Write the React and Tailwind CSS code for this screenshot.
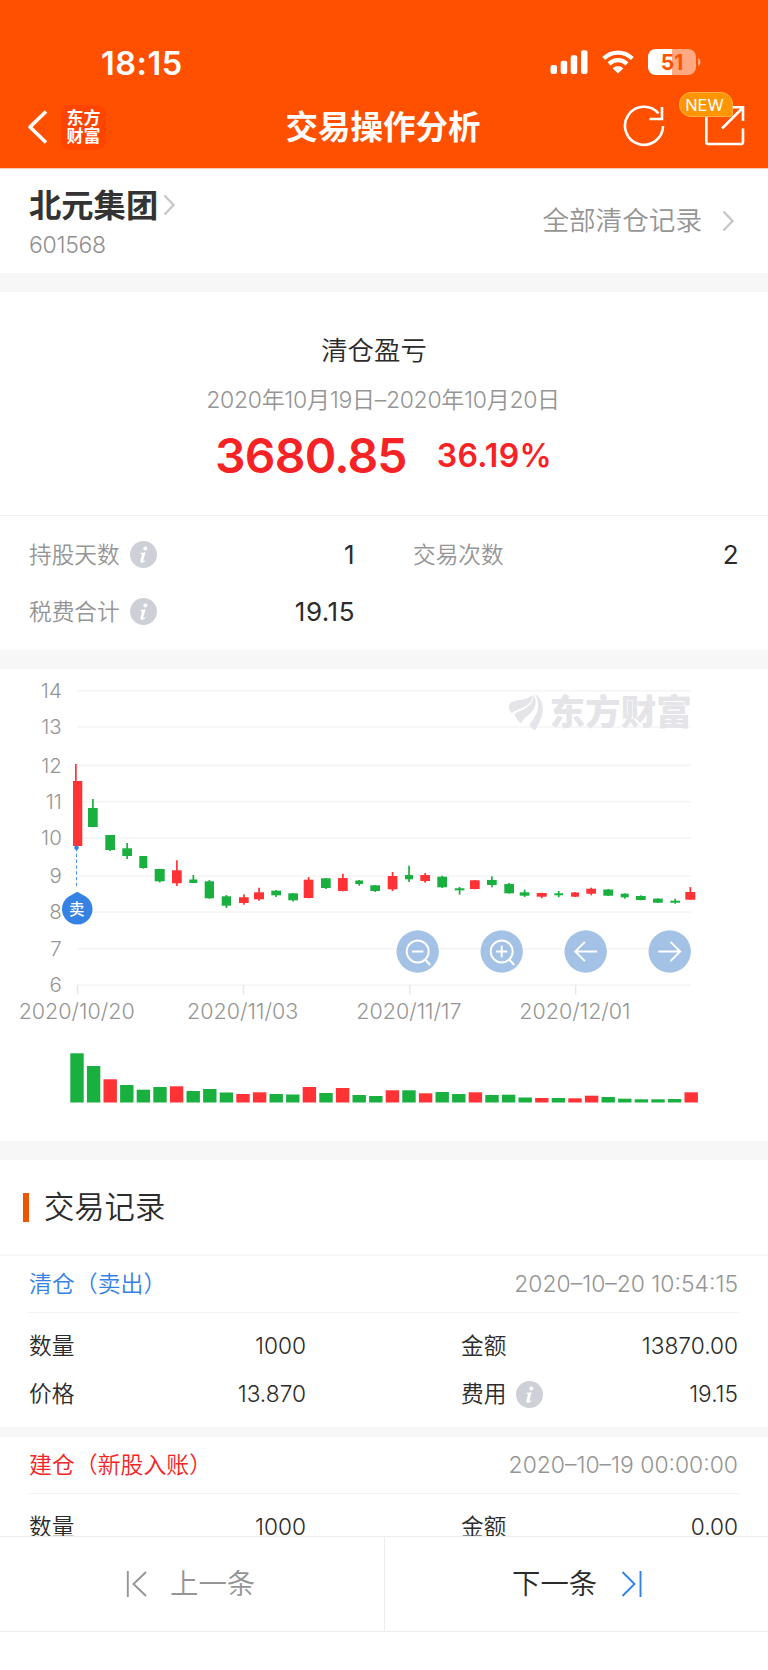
const RED = '#ff3336';
const GREEN = '#19b040';

// x, width, high, body top, body bottom, low, rising
const candles = [
    [73, 9.3, 764, 781, 846, 846, 1],
    [88, 9.7, 799, 808, 827, 827.3, 0],
    [105.3, 9.7, 835, 835, 850, 851, 0],
    [122.3, 9.7, 843, 848.3, 856, 859, 0],
    [139.3, 8, 856, 856, 868, 868.7, 0],
    [154.7, 10, 869, 869, 881.3, 882.5, 0],
    [172, 9.7, 860.3, 870.3, 883.3, 886, 1],
    [189.3, 8, 875, 879.5, 883, 883, 0],
    [204.7, 9.3, 880, 881.3, 898.3, 898.7, 0],
    [221.7, 9.3, 895, 896.3, 905.7, 908, 0],
    [239, 9.7, 894.3, 897.3, 903, 904.7, 1],
    [254, 10, 887.7, 892.3, 899.3, 900.7, 1],
    [271.3, 9.7, 890, 890.7, 895.3, 897, 0],
    [288.3, 9.7, 893, 893.3, 900.3, 901.5, 0],
    [303.7, 9.7, 877, 879.7, 898, 898.3, 1],
    [321, 9.7, 878, 878.3, 888, 889, 0],
    [338, 9.7, 873.7, 878, 891, 891.3, 1],
    [355.3, 7.7, 880, 880.5, 884, 885.7, 0],
    [370.3, 9.7, 885, 885.3, 891, 892, 0],
    [387.7, 9.7, 872, 876, 889.3, 891, 1],
    [405, 8, 865.7, 875, 879.3, 882, 0],
    [420.3, 9.7, 873, 875, 881, 882.7, 1],
    [437.3, 9.7, 875.7, 876.7, 887.3, 888, 0],
    [454.7, 9.7, 887, 888.3, 890.3, 894.7, 0],
    [470, 9.7, 880, 880.3, 889, 889.3, 1],
    [487, 9.7, 876.3, 880, 885, 887.3, 0],
    [504.3, 9.7, 883, 884, 893.3, 893.7, 0],
    [519.7, 9.7, 889.7, 892.3, 895.7, 897, 0],
    [536.7, 10, 892.7, 893, 896.7, 898.3, 1],
    [554.3, 8.7, 891, 893.3, 895.3, 897.3, 0],
    [571, 8, 892, 892.5, 896.7, 897, 1],
    [586.3, 9.7, 887.7, 888.7, 893.7, 895.3, 1],
    [603.3, 9.7, 889, 889.5, 895.7, 896, 0],
    [620.7, 8, 893.3, 893.7, 897.3, 898.7, 0],
    [636, 9.7, 895.3, 896, 900, 900.3, 0],
    [653, 9.7, 898.3, 898.6, 902.7, 903, 0],
    [670.3, 9.7, 898.7, 900.7, 902.7, 903.7, 0],
    [685.3, 10, 887, 892, 899.7, 900, 1],
];

// bar height, rising
const volumes = [
    [49.2, 0], [36.5, 0], [23.2, 1], [17.5, 0], [12.8, 0], [15.5, 0], [16.2, 1], [11.5, 0],
    [13.5, 0], [10, 0], [8.5, 1], [10.2, 1], [8.5, 0], [8, 0], [15.5, 1], [9.5, 0],
    [14.5, 1], [7.5, 0], [6.5, 0], [12.2, 1], [12.2, 0], [9.2, 1], [10.5, 0], [8.5, 0],
    [10.2, 1], [7.5, 0], [7.8, 0], [5, 0], [4.5, 1], [4.5, 0], [4.2, 1], [6.8, 1],
    [5.5, 0], [3.8, 0], [3.2, 0], [3.2, 0], [3.5, 0], [10.2, 1],
];

const levels = [
    [14, 690.7], [13, 727], [12, 765.3], [11, 801.7], [10, 838],
    [9, 876], [8, 912], [7, 948.7], [6, 985],
];

const ticks = [
    ['2020/10/20', 77.5], ['2020/11/03', 243.5], ['2020/11/17', 409.7], ['2020/12/01', 575.7],
];

function InfoIcon() {
    return (
        <svg width="27" height="27" viewBox="0 0 27 27" className="shrink-0">
            <circle cx="13.5" cy="13.5" r="13.5" fill="#cdd0d6" />
            <circle cx="15.3" cy="7.6" r="2" fill="#fff" />
            <path d="M10.6 12 L15.6 11.2 L13.3 19.6 Q13.3 20.6 16 19 Q14.6 22 11.8 22 Q10 22 10.4 19.6 L12.1 13.2 L10.4 12.9 Z" fill="#fff" />
        </svg>
    );
}

function Chevron({ className }) {
    return (
        <svg width="13" height="22" viewBox="0 0 13 22" fill="none" stroke="#c8c8c8" strokeWidth="2.4" className={className}>
            <path d="M1.5 1.5 L10.5 11 L1.5 20.5" />
        </svg>
    );
}

function StatusBar() {
    return (
        <div className="flex h-[84px] items-end justify-between pr-[67px] pl-[101px]">
            <span className="text-[32.5px] leading-[40px] font-semibold tracking-[0.5px]">18:15</span>
            <div className="mb-[9px] flex items-center">
                <svg width="38" height="26" viewBox="0 0 38 26" fill="#fff">
                    <rect x="0.5" y="16" width="6.5" height="9" rx="2" />
                    <rect x="10.7" y="11.7" width="6.5" height="13.3" rx="2" />
                    <rect x="20.7" y="6.3" width="6.5" height="18.7" rx="2" />
                    <rect x="31" y="1.3" width="6.5" height="23.7" rx="2" />
                </svg>
                <svg width="32" height="24" viewBox="0 0 32 24" fill="none" stroke="#fff" strokeWidth="4.3" className="ml-[14px]">
                    <path d="M1.7 8.5 Q8 2.6 16 2.6 Q24 2.6 30.3 8.5" />
                    <path d="M7 13.9 Q11 10.2 16 10.2 Q21 10.2 25 13.9" />
                    <path d="M16 23.5 L10.6 18.3 Q16 13.7 21.4 18.3 Z" fill="#fff" stroke="none" />
                </svg>
                <svg width="53" height="26" viewBox="0 0 53 26" className="ml-[14px]">
                    <rect width="48" height="26" rx="8" fill="#ffa983" />
                    <path d="M8 0 H24 V26 H8 A8 8 0 0 1 0 18 V8 A8 8 0 0 1 8 0 Z" fill="#fff" />
                    <path d="M50 9 Q52.6 10 52.6 13 Q52.6 16 50 17 Z" fill="#ffa983" />
                    <text x="24" y="20.5" textAnchor="middle" fontSize="21" fontWeight="700" fill="#ff5200">51</text>
                </svg>
            </div>
        </div>
    );
}

function Header() {
    return (
        <header className="h-[169px] border-b border-[#ffc9b0] bg-[#ff5000] text-white">
            <StatusBar />
            <div className="grid h-[84px] grid-cols-[1fr_auto_1fr] items-center">
                <div className="flex items-center pt-[2px] pl-[27px]">
                    <svg width="21" height="34" viewBox="0 0 21 34" fill="none" stroke="#fff" strokeWidth="3.6" strokeLinejoin="round">
                        <path d="M19 1.5 L3 17 L19 32.5" />
                    </svg>
                    <div className="ml-[13px] flex h-[45px] w-[45px] flex-col items-center justify-center rounded-[9px] bg-[#ff4400] text-[17px] leading-[18.5px] font-bold">
                        <span>东方</span>
                        <span>财富</span>
                    </div>
                </div>
                <h1 className="pt-[3px] pr-[2px] text-[32.5px] leading-[40px] font-semibold">交易操作分析</h1>
                <div className="flex justify-end pr-[22px]">
                    <svg width="42" height="42" viewBox="0 0 42 42" fill="none" stroke="#fff" strokeWidth="2.6">
                        <path d="M40 21 A19 19 0 1 1 35.5 8.5" />
                        <path d="M39 2 V14 H26.5" />
                    </svg>
                    <div className="relative ml-[39px]">
                        <svg width="42" height="42" viewBox="0 0 42 42" fill="none" stroke="#fff" strokeWidth="2.6">
                            <path d="M2.3 8 V37 Q2.3 39 4.3 39 H37 Q39 39 39 37 V23.5" />
                            <path d="M18 23.5 L38 3.5 M27 2.3 H39 V16" />
                        </svg>
                        <span className="absolute top-[-13px] left-[-25px] h-[25px] w-[54px] rounded-[12px] rounded-br-[3px] border border-[#ffb04a] bg-[#ff9500] pr-[3px] text-center text-[16.5px] leading-[24px]">
                            NEW
                        </span>
                    </div>
                </div>
            </div>
        </header>
    );
}

function StockBar() {
    return (
        <section className="flex h-[104px] items-center justify-between pr-[33px] pl-[29px]">
            <div className="pt-[3px]">
                <div className="flex items-center">
                    <span className="text-[32.3px] leading-[42px] font-bold text-[#333]">北元集团</span>
                    <Chevron className="mb-[3px] ml-[5px]" />
                </div>
                <div className="mt-[3px] text-[23px] leading-[30px] font-light tracking-[-0.3px] text-[#8f8f8f]">601568</div>
            </div>
            <div className="flex items-center text-[26.6px] font-[350] text-[#959595]">
                全部清仓记录
                <Chevron className="ml-[20px]" />
            </div>
        </section>
    );
}

function Gap() {
    return <div className="h-[19px] bg-[#f7f7f7]" />;
}

function Summary() {
    return (
        <section className="h-[358px]">
            <div className="flex h-[224px] flex-col items-center border-b border-[#f0f0f0] pt-[38px]">
                <h2 className="mr-[20px] text-[26.4px] leading-[40px] font-[350]">清仓盈亏</h2>
                <p className="mt-[12px] mr-[2px] text-[23px] leading-[36px] font-[350] tracking-[-0.3px] whitespace-nowrap text-[#959595]">
                    2020年10月19日–2020年10月20日
                </p>
                <div className="mt-[8px] mr-[1px] flex items-center font-semibold text-[#f72225]">
                    <span className="text-[48px] leading-[60px] tracking-[-0.8px]">3680.85</span>
                    <span className="ml-[30px] text-[32px] tracking-[0.3px]">36.19%</span>
                </div>
            </div>
            <div className="grid grid-cols-2 pt-[11px]">
                <Stat label="持股天数" value="1" info />
                <Stat label="交易次数" value="2" />
                <Stat label="税费合计" value="19.15" info />
            </div>
        </section>
    );
}

function Stat({ label, value, info }) {
    return (
        <div className="flex h-[57px] items-center pr-[29px] pl-[29px]">
            <span className="text-[22.7px] font-[350] text-[#959595]">{label}</span>
            {info ? <span className="mb-[2px] ml-[10px]"><InfoIcon /></span> : null}
            <span className="mb-[2px] ml-auto text-[26px] tracking-[0.5px]">{value}</span>
        </div>
    );
}

function RoundButton({ x, children }) {
    return (
        <g transform={`translate(${x} 951.5)`} fill="none" stroke="#fff" strokeWidth="1.9">
            <circle r="21.2" fill="#7ea8da" fillOpacity="0.7" stroke="none" />
            {children}
        </g>
    );
}

function Chart() {
    return (
        <section className="h-[472px]">
            <svg width="768" height="472" viewBox="0 669 768 472" className="block">
                {levels.map(([value, y]) => (
                    <g key={value}>
                        <rect x="77" y={y - 0.8} width="614" height="1.7" fill="#f5f5f5" />
                        <text x="61.8" y={y + 7.2} textAnchor="end" fontSize="20.5" fontWeight="350" fill="#959595">{value}</text>
                    </g>
                ))}
                {ticks.map(([label, x]) => (
                    <g key={label}>
                        <rect x={x - 0.8} y="985" width="1.6" height="9.5" fill="#e9e9e9" />
                        <text x={x - 0.8} y="1019.3" textAnchor="middle" fontSize="21.5" fontWeight="350" fill="#959595">{label}</text>
                    </g>
                ))}

                <g fill="#e4e4e9">
                    <path d="M509 706 C509 702 514 701 522 699.5 C527 698.5 530 697 532.5 695.5 C533 699 531 703 525 706.5 C519 710 515 710 512 713 C509.5 712 509 709 509 706 Z" />
                    <path d="M533 694 C538 701 536 709 529 714.5 C524 718.5 523 720 521 723.5 C518 721.5 515.5 717 514.5 714.5 C517 711.5 521 711 526.5 707.5 C532 703.5 534 699 533 694 Z" />
                    <path d="M535 694 C540 697 543 703 542.8 709 C542.5 718 538 725 535 730.5 C532 729 530.5 726.5 529.5 724.5 C538 714.5 541 704 535 694 Z" />
                    <text x="549.5" y="725" fontSize="35.6" fontWeight="900">东方财富</text>
                </g>

                {candles.map(([x, width, high, top, bottom, low, rising], i) => (
                    <g key={x} fill={rising ? RED : GREEN}>
                        <rect x={i ? x + width / 2 - 0.8 : 75} y={high} width="1.7" height={low - high} />
                        <rect x={x} y={top} width={width} height={bottom - top} />
                    </g>
                ))}

                <line x1="76.5" y1="848" x2="76.5" y2="888" stroke="#4a90ea" strokeWidth="1.1" strokeDasharray="3.3 2.5" />
                <circle cx="76.5" cy="847.7" r="2.3" fill="#3682e4" />
                <path d="M77.3 891.7 L83 895 A15.3 15.3 0 1 1 71.5 895 Z" fill="#3682e4" />
                <text x="76.7" y="914.7" textAnchor="middle" fontSize="15.5" fontWeight="500" fill="#fff">卖</text>

                <RoundButton x={417.7}>
                    <circle r="11" />
                    <path d="M-5.7 0 H5.7 M7.5 8 L12.5 13.5" />
                </RoundButton>
                <RoundButton x={501.7}>
                    <circle r="11" />
                    <path d="M-5.7 0 H5.7 M0 -5.7 V5.7 M7.5 8 L12.5 13.5" />
                </RoundButton>
                <RoundButton x={585.7}>
                    <path d="M11.5 0 H-10.5 M-0.8 -9.7 L-10.5 0 L-0.8 9.7" />
                </RoundButton>
                <RoundButton x={669.7}>
                    <path d="M-11.5 0 H10.5 M0.8 -9.7 L10.5 0 L0.8 9.7" />
                </RoundButton>

                {volumes.map(([height, rising], i) => (
                    <rect key={i} x={70.3 + i * 16.6} y={1102.5 - height} width="13.4" height={height} fill={rising ? RED : GREEN} />
                ))}
            </svg>
        </section>
    );
}

function Field({ label, value, info }) {
    return (
        <div className="flex h-[48px] items-center text-[22.7px] font-[350]">
            <span>{label}</span>
            {info ? <span className="ml-[10px]"><InfoIcon /></span> : null}
            <span className="ml-auto">{value}</span>
        </div>
    );
}

function TradeRecord({ title, time, color, fields }) {
    return (
        <article className="px-[29px]">
            <div className="flex h-[57px] items-center justify-between border-b border-[#f2f2f2] pr-[1px] text-[22.9px] font-[350]">
                <span className={color}>{title}</span>
                <span className="text-[#959595]">{time}</span>
            </div>
            <div className="grid grid-cols-[277px_277px] justify-between pt-[9px] pr-[1px] pb-[9px]">
                {fields.map((field) => (
                    <Field key={field.label} {...field} />
                ))}
            </div>
        </article>
    );
}

function Records() {
    return (
        <section className="h-[376px] overflow-hidden">
            <div className="flex h-[96px] items-center border-b-2 border-[#f7f7f7] pl-[23px]">
                <span className="h-[29px] w-[6px] bg-[#ed5500]" />
                <h2 className="ml-[15px] text-[30.3px] leading-[40px] font-[350]">交易记录</h2>
            </div>
            <TradeRecord
                title="清仓（卖出）"
                time="2020–10–20 10:54:15"
                color="text-[#3682e4]"
                fields={[
                    { label: '数量', value: '1000' },
                    { label: '金额', value: '13870.00' },
                    { label: '价格', value: '13.870' },
                    { label: '费用', value: '19.15', info: true },
                ]}
            />
            <div className="h-[10px] bg-[#f7f7f7]" />
            <TradeRecord
                title="建仓（新股入账）"
                time="2020–10–19 00:00:00"
                color="text-[#f72225]"
                fields={[
                    { label: '数量', value: '1000' },
                    { label: '金额', value: '0.00' },
                ]}
            />
        </section>
    );
}

function Pager() {
    return (
        <nav className="grid h-[96px] grid-cols-2 border-y border-[#ececec] text-[28.4px] font-[350]">
            <button type="button" className="flex items-center pl-[126px] text-[#959595]">
                <svg width="22" height="28" viewBox="0 0 22 28" fill="none" stroke="#959595" strokeWidth="1.9">
                    <path d="M1.8 1 V27 M20 2 L7.5 14 L20 26" />
                </svg>
                <span className="ml-[22px]">上一条</span>
            </button>
            <button type="button" className="flex items-center border-l border-[#ececec] pl-[127px]">
                <span>下一条</span>
                <svg width="22" height="28" viewBox="0 0 22 28" fill="none" stroke="#2f80ed" strokeWidth="1.9" className="ml-[24px]">
                    <path d="M19.5 1 V27 M1.5 2 L13.5 14 L1.5 26" />
                </svg>
            </button>
        </nav>
    );
}

export default function App() {
    return (
        <div lang="zh-CN" className="h-[1670px] w-[768px] overflow-hidden bg-white font-['Inter','Noto_Sans_CJK_SC',sans-serif] text-[#2b2b2b]">
            <Header />
            <StockBar />
            <Gap />
            <Summary />
            <Gap />
            <Chart />
            <Gap />
            <Records />
            <Pager />
        </div>
    );
}
